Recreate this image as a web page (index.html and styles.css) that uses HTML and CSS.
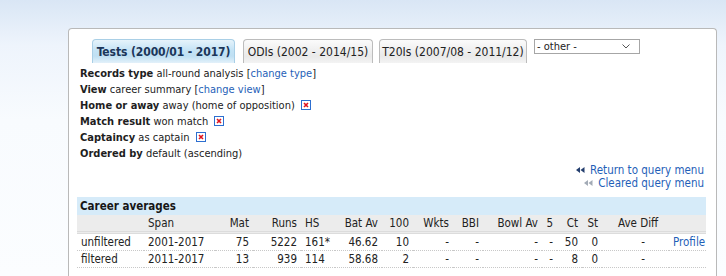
FILE: index.html
```html
<!DOCTYPE html>
<html>
<head>
<meta charset="utf-8">
<link rel="stylesheet" href="styles.css">
</head>
<body>
<div class="page">
  <div class="panel">
    <div class="tabs">
      <div class="tab active">Tests (2000/01 - 2017)</div>
      <div class="tab t-odi">ODIs (2002 - 2014/15)</div>
      <div class="tab t-t20">T20Is (2007/08 - 2011/12)</div>
      <div class="fake-select"><span>- other -</span>
        <svg width="8" height="5" viewBox="0 0 8 5"><path d="M0.5 0.5 L4 4 L7.5 0.5" fill="none" stroke="#555" stroke-width="1"/></svg>
      </div>
    </div>
    <div class="info">
      <div><b>Records type</b> all-round analysis [<a>change type</a>]</div>
      <div><b>View</b> career summary [<a>change view</a>]</div>
      <div><b>Home or away</b> away (home of opposition) <span class="xi"><svg width="10" height="10" viewBox="0 0 10 10"><rect x="0.5" y="0.5" width="9" height="9" fill="#fff" stroke="#2d6fd0"/><path d="M3 3 L7 7 M7 3 L3 7" stroke="#e0141e" stroke-width="1.6"/></svg></span></div>
      <div><b>Match result</b> won match <span class="xi"><svg width="10" height="10" viewBox="0 0 10 10"><rect x="0.5" y="0.5" width="9" height="9" fill="#fff" stroke="#2d6fd0"/><path d="M3 3 L7 7 M7 3 L3 7" stroke="#e0141e" stroke-width="1.6"/></svg></span></div>
      <div><b>Captaincy</b> as captain <span class="xi"><svg width="10" height="10" viewBox="0 0 10 10"><rect x="0.5" y="0.5" width="9" height="9" fill="#fff" stroke="#2d6fd0"/><path d="M3 3 L7 7 M7 3 L3 7" stroke="#e0141e" stroke-width="1.6"/></svg></span></div>
      <div><b>Ordered by</b> default (ascending)</div>
    </div>
    <div class="links">
      <div><svg class="arr" width="9" height="6" viewBox="0 0 9 6"><path d="M0 3 L4 0 L4 6 Z M4.5 3 L8.5 0 L8.5 6 Z" fill="#243f6e"/></svg><a>Return to query menu</a></div>
      <div><svg class="arr" width="9" height="6" viewBox="0 0 9 6"><path d="M0 3 L4 0 L4 6 Z M4.5 3 L8.5 0 L8.5 6 Z" fill="#a3abb6"/></svg><a>Cleared query menu</a></div>
    </div>
    <table class="stats">
      <colgroup>
        <col style="width:67px"><col style="width:71px"><col style="width:38px"><col style="width:48px">
        <col style="width:34px"><col style="width:47px"><col style="width:31px"><col style="width:40px">
        <col style="width:30px"><col style="width:59px"><col style="width:15px"><col style="width:25px">
        <col style="width:20px"><col style="width:67px"><col style="width:37px">
      </colgroup>
      <thead>
        <tr class="cap"><th colspan="15">Career averages</th></tr>
        <tr class="head">
          <th></th><th class="l">Span</th><th>Mat</th><th>Runs</th><th class="l hs">HS</th><th>Bat Av</th><th>100</th><th>Wkts</th><th>BBI</th><th>Bowl Av</th><th>5</th><th>Ct</th><th>St</th><th class="l ad">Ave Diff</th><th></th>
        </tr>
      </thead>
      <tbody>
        <tr>
          <td class="l">unfiltered</td><td class="l">2001-2017</td><td>75</td><td>5222</td><td class="l hs">161*</td><td>46.62</td><td>10</td><td>-</td><td>-</td><td>-</td><td>-</td><td>50</td><td>0</td><td class="add">-</td><td class="prof"><a>Profile</a></td>
        </tr>
        <tr>
          <td class="l">filtered</td><td class="l">2011-2017</td><td>13</td><td>939</td><td class="l hs">114</td><td>58.68</td><td>2</td><td>-</td><td>-</td><td>-</td><td>-</td><td>8</td><td>0</td><td class="add">-</td><td class="prof"></td>
        </tr>
      </tbody>
    </table>
  </div>
</div>
</body>
</html>
```

FILE: styles.css
```css
html, body {
  margin: 0;
  padding: 0;
}
body {
  width: 726px;
  height: 276px;
  overflow: hidden;
  background: linear-gradient(#d9e6f5 0px, #eef4fc 45px, #f8fbfe 120px, #fbfdff 276px);
  font-family: "DejaVu Sans Condensed", "DejaVu Sans", sans-serif;
  font-size: 11px;
  color: #222;
}
.page {
  padding: 28px 0 0 68px;
}
.panel {
  box-sizing: border-box;
  width: 649px;
  height: 248px;
  background: #fff;
  border: 1px solid #b9b9b9;
  border-bottom: none;
  border-radius: 4px 4px 0 0;
  padding: 0 10px 0 8px;
}
.tabs {
  display: flex;
  align-items: flex-start;
  margin: 10px 0 0 15px;
  height: 26px;
}
.tab {
  box-sizing: border-box;
  height: 24px;
  border: 1px solid #bcbcbc;
  border-bottom: none;
  border-radius: 4px 4px 0 0;
  background: linear-gradient(#fbfbfb, #e9e9e9 70%, #f3f3f3);
  padding-top: 5px;
  text-align: center;
  font-size: 12px;
  color: #222;
  white-space: nowrap;
}
.tab.active {
  width: 143px;
  border-color: #a9cfe6;
  background: linear-gradient(#e6f3fb, #c4e3f5 45%, #bfe0f3 70%, #e3f1fa);
  color: #1b365a;
  font-weight: bold;
  font-size: 12px;
  letter-spacing: -0.1px;
}
.t-odi {
  width: 130px;
  margin-left: 8px;
}
.t-t20 {
  width: 148px;
  margin-left: 6px;
}
.fake-select {
  box-sizing: border-box;
  width: 106px;
  height: 15px;
  margin-left: 7px;
  border: 1px solid #a6a6a6;
  background: #fff;
  display: flex;
  align-items: center;
  justify-content: space-between;
  padding: 0 9px 0 2px;
  font-size: 11px;
  line-height: 13px;
}
.info {
  padding: 1px 0 0 3px;
  line-height: 16px;
  font-size: 11px;
}
.info b {
  color: #1e1e1e;
}
a {
  color: #1f5fb8;
  text-decoration: none;
}
.xi {
  display: inline-block;
  vertical-align: -1px;
  margin-left: 3px;
  line-height: 0;
}
.links {
  margin-top: 2px;
  padding-right: 2px;
  text-align: right;
  line-height: 13px;
  font-size: 11.5px;
}
.arr {
  margin-right: 5px;
  vertical-align: 1px;
}
.stats {
  margin-top: 7px;
  width: 629px;
  table-layout: fixed;
  border-collapse: collapse;
  font-size: 11.5px;
}
.stats th, .stats td {
  padding: 0 4px;
  text-align: right;
  white-space: nowrap;
  overflow: visible;
}
.stats .l {
  text-align: left;
}
.stats tr.cap th {
  background: #d6ebf9;
  text-align: left;
  height: 18px;
  font-weight: bold;
  color: #161616;
  padding-left: 3px;
}
.stats tr.head th {
  background: #ececec;
  font-weight: normal;
  height: 16px;
  border-bottom: 3px double #dcdcdc;
}
.stats .hs {
  padding-left: 4px;
}
.stats th.ad {
  padding-left: 16px;
}
.stats td.add {
  text-align: right;
  padding-right: 24px;
}
.stats tbody td {
  height: 16px;
  border-bottom: 1px dotted #c8c8c8;
}
.stats td.prof {
  padding-right: 2px;
}
```
